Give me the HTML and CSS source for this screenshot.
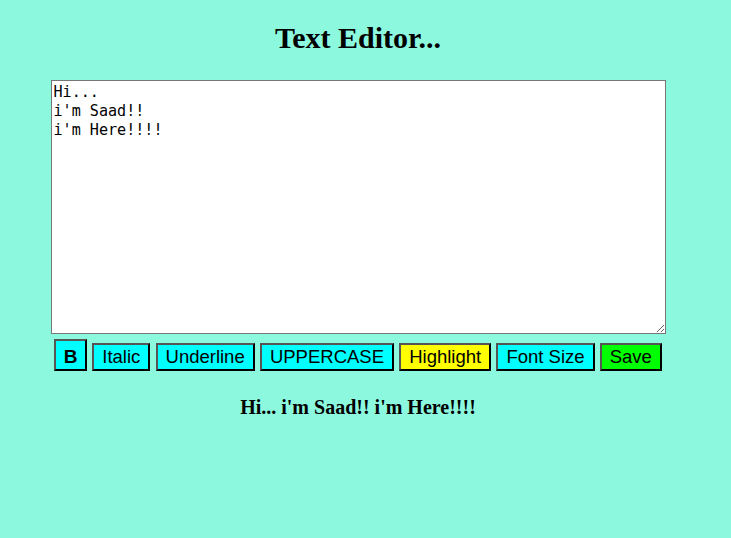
FILE: index.html
```html
<!DOCTYPE html>
<html>
<head>
<meta charset="utf-8">
<link rel="stylesheet" href="styles.css">
</head>
<body>
<div class="page">
  <h1 class="title">Text Editor...</h1>
  <textarea class="editor">Hi...
i'm Saad!!
i'm Here!!!!</textarea>
  <div class="toolbar">
    <button class="btn btn-bold">B</button>
    <button class="btn">Italic</button>
    <button class="btn">Underline</button>
    <button class="btn">UPPERCASE</button>
    <button class="btn btn-yellow">Highlight</button>
    <button class="btn">Font Size</button>
    <button class="btn btn-green">Save</button>
  </div>
  <p class="output">Hi... i'm Saad!! i'm Here!!!!</p>
</div>
</body>
</html>
```
FILE: styles.css
```css
html, body {
  margin: 0;
  padding: 0;
  background: #8cf9df;
}
body {
  font-family: "Liberation Serif", "Times New Roman", serif;
  height: 538px;
}
.page {
  width: 716px;
  display: flex;
  flex-direction: column;
  align-items: center;
  padding-top: 21px;
}
.title {
  margin: 0;
  font-size: 30px;
  line-height: 34px;
  font-weight: bold;
  color: #000;
}
.editor {
  box-sizing: border-box;
  width: 615px;
  height: 254px;
  margin-top: 25px;
  padding: 2px;
  border: 1px solid #767676;
  background: #fff;
  font-family: "DejaVu Sans Mono", "Liberation Mono", monospace;
  font-size: 15.1px;
  line-height: 19px;
  color: #000;
  outline: none;
}
.toolbar {
  display: flex;
  align-items: flex-end;
  gap: 5.2px;
  margin-top: 5px;
}
.btn {
  box-sizing: border-box;
  height: 28px;
  padding: 0 8px;
  border-width: 2px;
  border-style: solid;
  border-color: #555 #000 #000 #555;
  background: #00ffff;
  font-family: "Liberation Sans", Arial, sans-serif;
  font-size: 18.5px;
  line-height: 22px;
  color: #000;
  border-radius: 0;
}
.btn-bold {
  height: 32px;
  width: 33px;
  padding: 3px 0 0;
  font-weight: bold;
  font-size: 19px;
}
.btn-yellow {
  background: #ffff00;
}
.btn-green {
  background: #00ff00;
}
.output {
  margin: 24px 0 0;
  font-size: 20px;
  line-height: 24px;
  font-weight: bold;
  color: #000;
}
```
